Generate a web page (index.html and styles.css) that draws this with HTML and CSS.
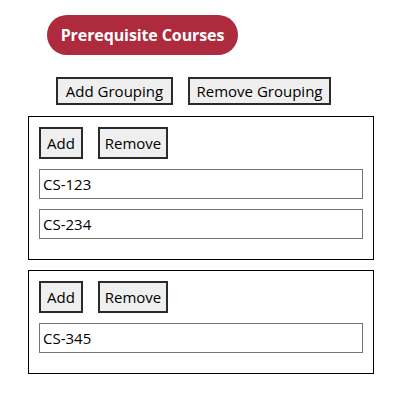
FILE: index.html
```html
<!DOCTYPE html>
<html>
<head>
<meta charset="utf-8">
<link rel="stylesheet" href="styles.css">
</head>
<body>
<div class="page">
  <div class="title-row"><h1 class="pill">Prerequisite Courses</h1></div>
  <div class="toolbar">
    <button class="btn btn-lg">Add Grouping</button>
    <button class="btn btn-lg">Remove Grouping</button>
  </div>
  <div class="group">
    <div class="group-actions">
      <button class="btn btn-sm btn-add">Add</button>
      <button class="btn btn-sm btn-remove">Remove</button>
    </div>
    <input class="course" type="text" value="CS-123">
    <input class="course" type="text" value="CS-234">
  </div>
  <div class="group">
    <div class="group-actions">
      <button class="btn btn-sm btn-add">Add</button>
      <button class="btn btn-sm btn-remove">Remove</button>
    </div>
    <input class="course" type="text" value="CS-345">
  </div>
</div>
</body>
</html>
```
FILE: styles.css
```css
* { box-sizing: border-box; }
body {
  margin: 8px;
  background: #fff;
  font-family: "Open Sans", "Noto Sans", sans-serif;
  color: #000;
}
.page {
  padding: 7px 18px 0 20px;
  display: flex;
  flex-direction: column;
}
.title-row {
  display: flex;
  padding-left: 19px;
}
.pill {
  margin: 0;
  height: 40px;
  width: 191px;
  border-radius: 20px;
  background: #ae2a3d;
  color: #fff;
  font-size: 16px;
  font-weight: 700;
  display: flex;
  align-items: center;
  justify-content: center;
  letter-spacing: -0.1px;
}
.toolbar {
  display: flex;
  gap: 15px;
  margin-top: 22px;
  padding-left: 28px;
}
.btn {
  font-family: "Open Sans", "Noto Sans", sans-serif;
  font-size: 15px;
  background: #efefef;
  border: 2px solid #2b2b2b;
  color: #000;
  padding: 0;
  display: flex;
  align-items: center;
  justify-content: center;
}
.btn-lg { height: 28px; }
.toolbar .btn-lg:first-child { width: 117px; }
.toolbar .btn-lg:last-child { width: 143px; }
.group {
  margin-top: 11px;
  border: 1px solid #000;
  padding: 10px 10px 20px 10px;
  display: flex;
  flex-direction: column;
  gap: 10px;
}
.group + .group { margin-top: 10px; }
.group-actions {
  display: flex;
  gap: 15px;
}
.btn-sm { height: 32px; }
.btn-add { width: 44px; }
.btn-remove { width: 70px; }
.course {
  height: 30px;
  width: 100%;
  border: 1px solid #767676;
  padding: 0 3px;
  font-family: "Open Sans", "Noto Sans", sans-serif;
  font-size: 15px;
  color: #000;
  outline: none;
}
```
